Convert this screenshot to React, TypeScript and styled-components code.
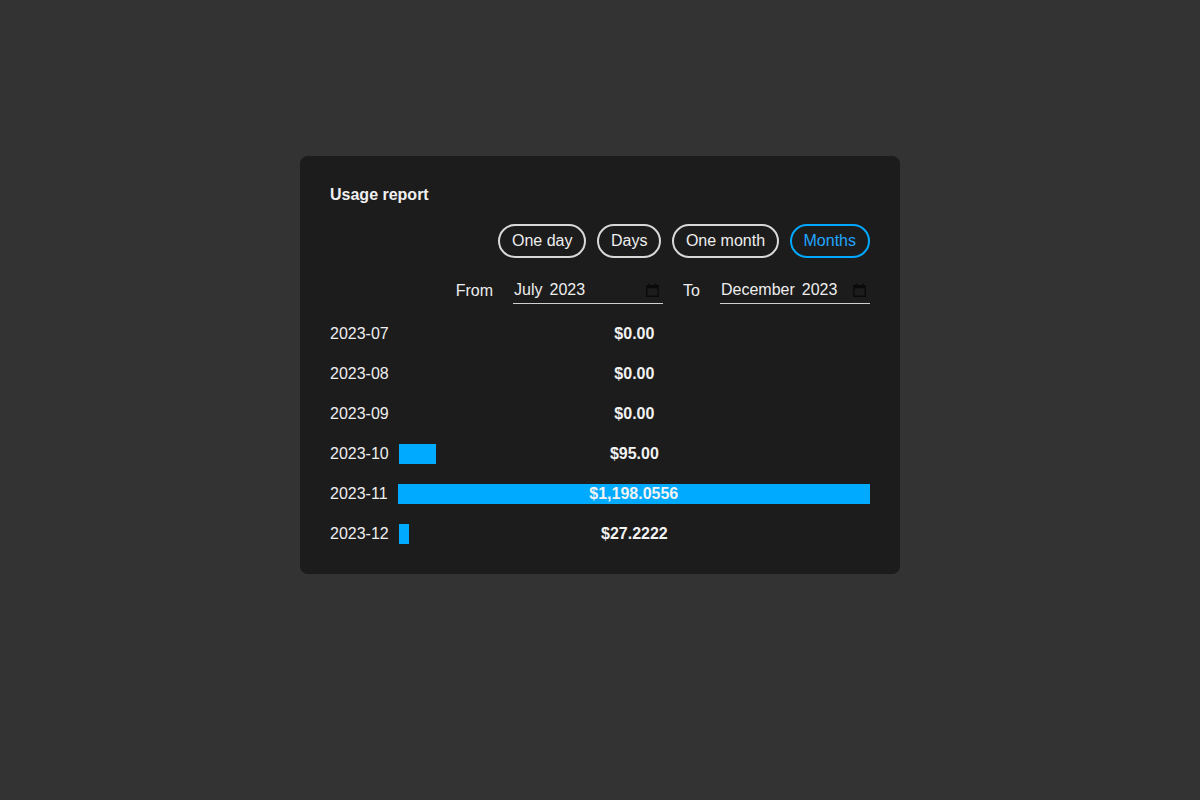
import styled, { createGlobalStyle } from 'styled-components';

const GlobalStyle = createGlobalStyle`
  html, body {
    margin: 0;
    padding: 0;
    background: #333333;
    font-family: "Liberation Sans", Arial, sans-serif;
    color: #eeeeee;
  }
`;

interface UsageRow {
  month: string;
  amount: number;
  label: string;
}

const rows: UsageRow[] = [
  { month: '2023-07', amount: 0, label: '$0.00' },
  { month: '2023-08', amount: 0, label: '$0.00' },
  { month: '2023-09', amount: 0, label: '$0.00' },
  { month: '2023-10', amount: 95, label: '$95.00' },
  { month: '2023-11', amount: 1198.0556, label: '$1,198.0556' },
  { month: '2023-12', amount: 27.2222, label: '$27.2222' },
];

const ranges = ['One day', 'Days', 'One month', 'Months'];

const CalendarIcon = () => (
  <svg width="13" height="14" viewBox="0 0 13 14" fill="none">
    <rect x="0.75" y="2.75" width="11.5" height="10.5" stroke="#0b0b0b" strokeWidth="1.5" />
    <rect x="0.75" y="2.75" width="11.5" height="2.5" fill="#0b0b0b" />
    <rect x="2.5" y="0.5" width="1.5" height="2.5" fill="#0b0b0b" />
    <rect x="9" y="0.5" width="1.5" height="2.5" fill="#0b0b0b" />
  </svg>
);

const MonthField: React.FC<{ month: string; year: string }> = ({ month, year }) => (
  <Field>
    <FieldPart>{month}</FieldPart>
    <FieldPart $spaced>{year}</FieldPart>
    <Picker>
      <CalendarIcon />
    </Picker>
  </Field>
);

const App: React.FC = () => {
  const max = Math.max(...rows.map((r) => r.amount));

  return (
    <Page>
      <GlobalStyle />
      <Card>
        <Title>Usage report</Title>
        <Toolbar>
          {ranges.map((r) => (
            <RangeButton key={r} $active={r === 'Months'}>
              {r}
            </RangeButton>
          ))}
        </Toolbar>
        <DateRow>
          <DateLabel>From</DateLabel>
          <MonthField month="July" year="2023" />
          <DateLabel>To</DateLabel>
          <MonthField month="December" year="2023" />
        </DateRow>
        <Rows>
          {rows.map((r) => (
            <Row key={r.month}>
              <Month>{r.month}</Month>
              <BarArea>
                <Bar style={{ width: `${(r.amount / max) * 100}%` }} />
                <Amount>{r.label}</Amount>
              </BarArea>
            </Row>
          ))}
        </Rows>
      </Card>
    </Page>
  );
};

export default App;

const Page = styled.div`
  width: 1200px;
  height: 800px;
  display: flex;
  justify-content: center;
  align-items: flex-start;
  padding-top: 156px;
  box-sizing: border-box;
`;

const Card = styled.div`
  width: 600px;
  box-sizing: border-box;
  background: #1c1c1c;
  border-radius: 8px;
  padding: 30px 30px 20px;
  display: flex;
  flex-direction: column;
`;

const Title = styled.div`
  font-size: 16px;
  font-weight: bold;
  line-height: 18px;
  color: #f0f0f0;
`;

const Toolbar = styled.div`
  display: flex;
  justify-content: flex-end;
  gap: 10.5px;
  margin-top: 20px;
`;

const RangeButton = styled.button<{ $active?: boolean }>`
  height: 34px;
  padding: 0 12px;
  border-radius: 17px;
  border: 2px solid ${(p) => (p.$active ? '#00a8ff' : '#d8d8d8')};
  background: transparent;
  color: ${(p) => (p.$active ? '#22a6ff' : '#eeeeee')};
  font-family: "Liberation Sans", Arial, sans-serif;
  font-size: 16px;
  cursor: pointer;
`;

const DateRow = styled.div`
  display: flex;
  justify-content: flex-end;
  align-items: center;
  margin-top: 19px;
`;

const DateLabel = styled.span`
  font-size: 16px;
  color: #eeeeee;
  margin: 0 20px;
  line-height: 20px;
`;

const Field = styled.div`
  width: 150px;
  height: 27px;
  box-sizing: border-box;
  display: flex;
  align-items: center;
  border-bottom: 1px solid #d0d0d0;
  padding: 0 4px 0 1px;
  font-size: 16px;
  color: #eeeeee;
`;

const FieldPart = styled.span<{ $spaced?: boolean }>`
  margin-left: ${(p) => (p.$spaced ? '7px' : '0')};
  line-height: 20px;
`;

const Picker = styled.span`
  margin-left: auto;
  display: flex;
  align-items: center;
`;

const Rows = styled.div`
  display: flex;
  flex-direction: column;
  margin-top: 10px;
`;

const Row = styled.div`
  display: flex;
  align-items: center;
  height: 40px;
  gap: 10px;
`;

const Month = styled.div`
  font-size: 16px;
  color: #eeeeee;
`;

const BarArea = styled.div`
  flex: 1;
  display: grid;
  align-items: center;
  height: 20px;
`;

const Bar = styled.div`
  grid-area: 1 / 1;
  height: 20px;
  background: #00aaff;
`;

const Amount = styled.div`
  grid-area: 1 / 1;
  text-align: center;
  font-size: 16px;
  font-weight: bold;
  color: #f2f2f2;
  line-height: 20px;
`;
